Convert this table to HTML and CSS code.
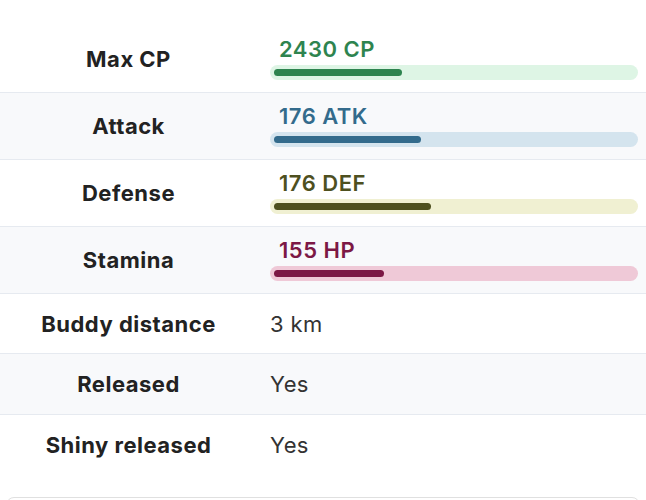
FILE: index.html
```html
<!DOCTYPE html>
<html>
<head>
<meta charset="utf-8">
<link rel="stylesheet" href="styles.css">
</head>
<body>
<div class="page">
  <table class="stats">
    <tbody>
      <tr>
        <th>Max CP</th>
        <td>
          <div class="stat cp">
            <div class="stat-text">2430 CP</div>
            <div class="track"><div class="fill" style="width:35.6%"></div></div>
          </div>
        </td>
      </tr>
      <tr class="alt">
        <th>Attack</th>
        <td>
          <div class="stat atk">
            <div class="stat-text">176 ATK</div>
            <div class="track"><div class="fill" style="width:40.8%"></div></div>
          </div>
        </td>
      </tr>
      <tr>
        <th>Defense</th>
        <td>
          <div class="stat def">
            <div class="stat-text">176 DEF</div>
            <div class="track"><div class="fill" style="width:43.6%"></div></div>
          </div>
        </td>
      </tr>
      <tr class="alt">
        <th>Stamina</th>
        <td>
          <div class="stat hp">
            <div class="stat-text">155 HP</div>
            <div class="track"><div class="fill" style="width:30.6%"></div></div>
          </div>
        </td>
      </tr>
      <tr class="plain">
        <th>Buddy distance</th>
        <td>3 km</td>
      </tr>
      <tr class="plain alt tall">
        <th>Released</th>
        <td>Yes</td>
      </tr>
      <tr class="plain last">
        <th>Shiny released</th>
        <td>Yes</td>
      </tr>
    </tbody>
  </table>
  <div class="next-card"></div>
</div>
</body>
</html>
```

FILE: styles.css
```css
html, body {
  margin: 0;
  padding: 0;
  background: #ffffff;
}

.page {
  padding-top: 26px;
  font-family: Inter, "Liberation Sans", sans-serif;
  color: #222222;
}

.stats {
  width: 100%;
  border-collapse: collapse;
  table-layout: fixed;
}

.stats tr {
  border-bottom: 1px solid #e6eaf0;
}

.stats tr.last {
  border-bottom: none;
}

.stats tr.alt {
  background: #f8f9fb;
}

.stats th {
  width: 257px;
  font-weight: 700;
  font-size: 22px;
  letter-spacing: 0.5px;
  line-height: 24px;
  text-align: center;
  vertical-align: middle;
  padding: 0;
  color: #222222;
}

.stats td {
  padding: 11px 8px 12px 13px;
  font-size: 22px;
  letter-spacing: 0.4px;
  line-height: 24px;
  color: #333333;
  vertical-align: middle;
}

.stats tr.plain td {
  padding-top: 18px;
  padding-bottom: 17px;
}

.stats tr.tall td {
  padding-bottom: 18px;
}

.stat {
  display: flex;
  flex-direction: column;
  gap: 4px;
}

.stat-text {
  padding-left: 9px;
  font-weight: 600;
  font-size: 22px;
  letter-spacing: 0.5px;
  line-height: 24px;
}

.track {
  height: 15px;
  border-radius: 8px;
  padding: 4px;
  box-sizing: border-box;
}

.fill {
  height: 7px;
  border-radius: 4px;
}

.cp .stat-text { color: #2e844f; }
.cp .track { background: #def5e5; }
.cp .fill { background: #2e844f; }

.atk .stat-text { color: #336b8c; }
.atk .track { background: #d4e4ee; }
.atk .fill { background: #336b8c; }

.def .stat-text { color: #4e501f; }
.def .track { background: #f0f0d2; }
.def .fill { background: #4e501f; }

.hp .stat-text { color: #7c1845; }
.hp .track { background: #efc9d7; }
.hp .fill { background: #7c1845; }

.next-card {
  margin: 23px 6px 0 6px;
  height: 40px;
  border: 1px solid #e0e0e0;
  border-radius: 8px;
}
```
